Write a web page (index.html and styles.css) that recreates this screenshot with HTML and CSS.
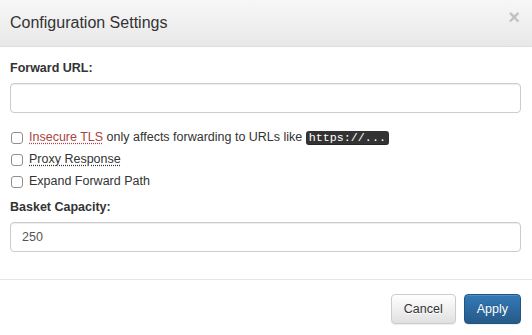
FILE: index.html
```html
<!DOCTYPE html>
<html>
<head>
<meta charset="utf-8">
<link rel="stylesheet" href="styles.css">
</head>
<body>
<div class="modal">
  <div class="modal-header">
    <h4 class="modal-title">Configuration Settings</h4>
    <button class="close" type="button">&times;</button>
  </div>
  <div class="modal-body">
    <div class="form-group">
      <label class="control-label">Forward URL:</label>
      <input class="form-control" type="text">
    </div>
    <div class="checks">
      <label class="check"><input type="checkbox"><span><abbr class="danger">Insecure TLS</abbr> only affects forwarding to URLs like <kbd>https://...</kbd></span></label>
      <label class="check"><input type="checkbox"><span><abbr>Proxy Response</abbr></span></label>
      <label class="check"><input type="checkbox"><span>Expand Forward Path</span></label>
    </div>
    <div class="form-group last">
      <label class="control-label">Basket Capacity:</label>
      <input class="form-control" type="text" value="250">
    </div>
  </div>
  <div class="modal-footer">
    <button class="btn btn-default" type="button">Cancel</button>
    <button class="btn btn-primary" type="button">Apply</button>
  </div>
</div>
</body>
</html>
```

FILE: styles.css
```css
* { box-sizing: border-box; }
html, body { margin: 0; padding: 0; background: #fff; }
body {
  font-family: "Liberation Sans", Arial, sans-serif;
  font-size: 12.5px;
  line-height: 18px;
  color: #333;
}
.modal { width: 532px; height: 335px; display: flex; flex-direction: column; }
.modal-header {
  height: 47px;
  padding: 10px 10px 10px 10px;
  background: linear-gradient(to bottom, #f7f7f7 0%, #e8e8e8 100%);
  border-bottom: 1px solid #dddddd;
  display: flex;
  align-items: flex-start;
  justify-content: space-between;
}
.modal-title {
  margin: 0;
  font-size: 16px;
  font-weight: normal;
  line-height: 26px;
  color: #333;
}
.close {
  border: 0;
  background: transparent;
  padding: 0;
  margin: -3px 2px 0 0;
  font-family: "Liberation Sans", Arial, sans-serif;
  font-size: 20px;
  font-weight: bold;
  line-height: 21px;
  color: #000;
  opacity: .2;
}
.modal-body { padding: 12px 11px 0 10px; flex: 1; }
.form-group { display: flex; flex-direction: column; }
.control-label {
  font-weight: bold;
  margin-bottom: 6px;
  display: block;
}
.form-control {
  width: 511px;
  height: 30px;
  margin: 0;
  padding: 5px 11px;
  font-family: "Liberation Sans", Arial, sans-serif;
  font-size: 12.5px;
  color: #555;
  background: #fff;
  border: 1px solid #ccc;
  border-radius: 4px;
  box-shadow: inset 0 1px 1px rgba(0,0,0,.075);
  outline: none;
}
.checks { margin-top: 13px; margin-bottom: 6px; display: flex; flex-direction: column; }
.check {
  height: 22px;
  display: flex;
  align-items: center;
  font-weight: normal;
}
.check input {
  margin: 0 6px 0 1px;
  width: 12px;
  height: 12px;
  appearance: none;
  -webkit-appearance: none;
  border: 1px solid #8f8f8f;
  border-radius: 3px;
  background: #fff;
  position: relative;
  top: 1px;
}
.check span { white-space: nowrap; }
abbr {
  text-decoration: underline dotted;
  text-underline-offset: 2px;
  cursor: help;
}
abbr.danger { color: #a94442; text-decoration-color: #a94442; }
kbd {
  display: inline-block;
  padding: 1px 3px;
  font-family: "Liberation Mono", "DejaVu Sans Mono", monospace;
  font-size: 11.7px;
  line-height: 12px;
  color: #fff;
  background: #333;
  border-radius: 3px;
  box-shadow: inset 0 -1px 0 rgba(0,0,0,.25);
  vertical-align: 0px;
}
.modal-footer {
  height: 56px;
  border-top: 1px solid #e5e5e5;
  padding: 14px 11px 0 10px;
  display: flex;
  justify-content: flex-end;
  align-items: flex-start;
  gap: 8px;
}
.btn {
  height: 30px;
  padding: 5px 12px;
  font-family: "Liberation Sans", Arial, sans-serif;
  font-size: 12.5px;
  line-height: 18px;
  border-radius: 4px;
  border: 1px solid transparent;
}
.btn-default {
  color: #333;
  background: linear-gradient(to bottom, #fff 0%, #e0e0e0 100%);
  border-color: #ccc;
  text-shadow: 0 1px 0 #fff;
  box-shadow: inset 0 1px 0 rgba(255,255,255,.15), 0 1px 1px rgba(0,0,0,.075);
}
.btn-primary {
  color: #fff;
  background: linear-gradient(to bottom, #337ab7 0%, #265a88 100%);
  border-color: #245580;
  text-shadow: 0 -1px 0 rgba(0,0,0,.2);
  box-shadow: inset 0 1px 0 rgba(255,255,255,.15), 0 1px 1px rgba(0,0,0,.075);
}
```
